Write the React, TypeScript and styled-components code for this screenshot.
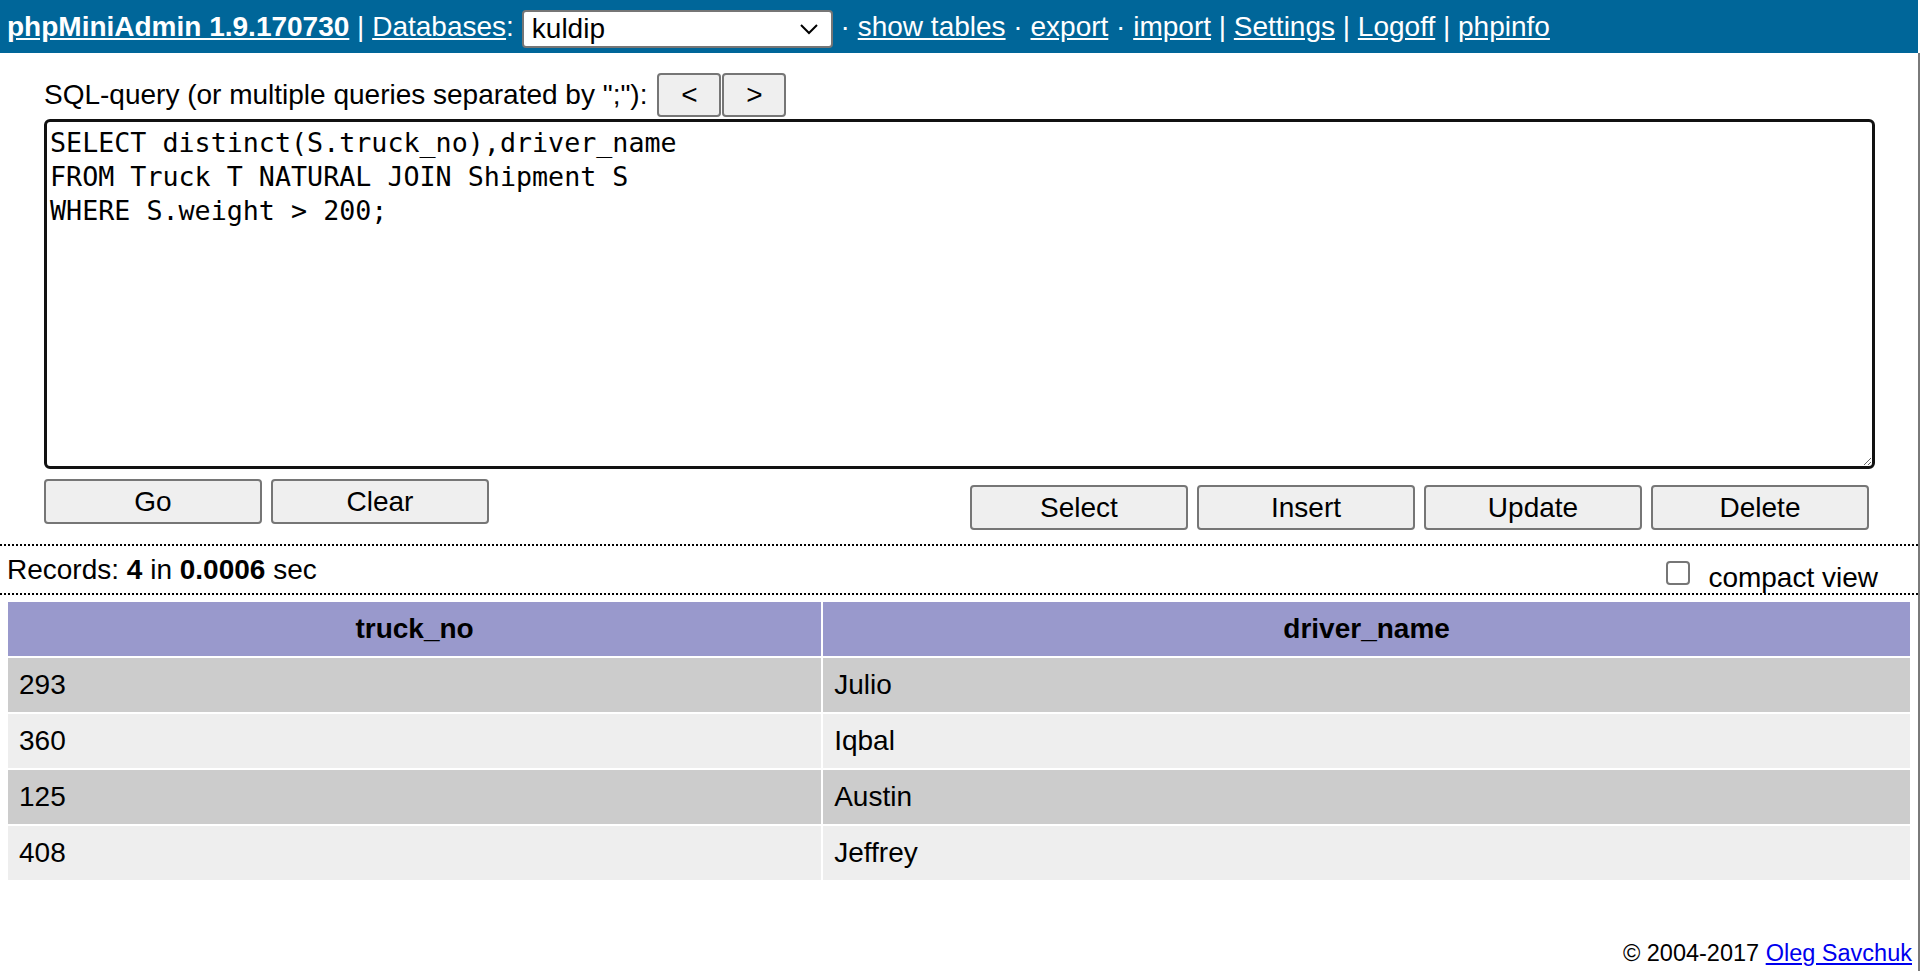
import * as React from "react";
import styled, { createGlobalStyle } from "styled-components";

const PALETTE = {
  HEADER_BG: "#006699",
  BTN_BG: "#efefef",
  BTN_BORDER: "#767676",
  TH_BG: "#9999cc",
  ROW_ODD: "#cccccc",
  ROW_EVEN: "#eeeeee",
  LINK: "#0000ee",
};

const rows = [
  { truck: "293", driver: "Julio" },
  { truck: "360", driver: "Iqbal" },
  { truck: "125", driver: "Austin" },
  { truck: "408", driver: "Jeffrey" },
];

const SQL = `SELECT distinct(S.truck_no),driver_name
FROM Truck T NATURAL JOIN Shipment S
WHERE S.weight > 200;`;

const App = () => {
  return (
    <Shell>
      <GlobalStyle />
      <Column>
        <Header>
          <Title href="#">phpMiniAdmin 1.9.170730</Title> |{" "}
          <NavLink href="#">Databases</NavLink>:
          <DbSelect>
            <span>kuldip</span>
            <svg width="20" height="12" viewBox="0 0 20 12">
              <polyline points="2,2 10,10 18,2" fill="none" stroke="#000" strokeWidth="2" />
            </svg>
          </DbSelect>{" "}
          · <NavLink href="#">show tables</NavLink> · <NavLink href="#">export</NavLink> ·{" "}
          <NavLink href="#">import</NavLink> | <NavLink href="#">Settings</NavLink> |{" "}
          <NavLink href="#">Logoff</NavLink> | <NavLink href="#">phpinfo</NavLink>
        </Header>

        <Form>
          <LabelRow>
            <span>SQL-query (or multiple queries separated by ";"):</span>
            <HistoryButtons>
              <NavButton>&lt;</NavButton>
              <NavButton>&gt;</NavButton>
            </HistoryButtons>
          </LabelRow>
          <QueryBox defaultValue={SQL} spellCheck={false} />
          <ButtonRow>
            <ButtonGroup>
              <Button>Go</Button>
              <Button>Clear</Button>
            </ButtonGroup>
            <ButtonGroup $offset>
              <Button>Select</Button>
              <Button>Insert</Button>
              <Button>Update</Button>
              <Button>Delete</Button>
            </ButtonGroup>
          </ButtonRow>
        </Form>

        <RecordsBar>
          <RecordsText>
            Records: <b>4</b> in <b>0.0006</b> sec
          </RecordsText>
          <CompactLabel>
            <Check type="checkbox" />
            <span>compact view</span>
          </CompactLabel>
        </RecordsBar>

        <ResultTable>
          <thead>
            <tr>
              <Th style={{ width: "42.8%" }}>truck_no</Th>
              <Th>driver_name</Th>
            </tr>
          </thead>
          <tbody>
            {rows.map((r, indx) => (
              <tr key={indx}>
                <Td $odd={indx % 2 === 0}>{r.truck}</Td>
                <Td $odd={indx % 2 === 0}>{r.driver}</Td>
              </tr>
            ))}
          </tbody>
        </ResultTable>

        <Footer>
          © 2004-2017 <FooterLink href="#">Oleg Savchuk</FooterLink>
        </Footer>
      </Column>
      <Edge />
    </Shell>
  );
};

export default App;

const GlobalStyle = createGlobalStyle`
  html, body {
    margin: 0;
    padding: 0;
    background: #fff;
  }
  body {
    font-family: "Liberation Sans", Arial, sans-serif;
    font-size: 28px;
    color: #000;
  }
`;

const Shell = styled.div`
  display: flex;
  min-height: 100vh;
`;

const Column = styled.div`
  width: 1918px;
`;

const Edge = styled.div`
  width: 2px;
  margin-top: 53px;
  background: #7a7a7a;
`;

const Header = styled.div`
  height: 53px;
  line-height: 53px;
  padding-left: 7px;
  background: ${PALETTE.HEADER_BG};
  color: #fff;
  white-space: nowrap;
`;

const Title = styled.a`
  color: #fff;
  font-weight: bold;
  text-decoration: underline;
`;

const NavLink = styled.a`
  color: #fff;
  text-decoration: underline;
`;

const DbSelect = styled.span`
  display: inline-flex;
  align-items: center;
  justify-content: space-between;
  box-sizing: border-box;
  width: 311px;
  height: 38px;
  margin-left: 8px;
  padding: 0 12px 0 8px;
  vertical-align: middle;
  line-height: 34px;
  background: #fff;
  color: #000;
  border: 2px solid ${PALETTE.BTN_BORDER};
  border-radius: 4px;
`;

const Form = styled.div`
  padding-left: 44px;
`;

const LabelRow = styled.div`
  display: flex;
  align-items: center;
  margin-top: 20px;
  gap: 10px;
`;

const HistoryButtons = styled.div`
  display: flex;
  gap: 1px;
`;

const Button = styled.button`
  box-sizing: border-box;
  width: 218px;
  height: 45px;
  padding: 0;
  font-family: inherit;
  font-size: 28px;
  color: #000;
  background: ${PALETTE.BTN_BG};
  border: 2px solid ${PALETTE.BTN_BORDER};
  border-radius: 4px;
`;

const NavButton = styled(Button)`
  width: 64px;
  height: 44px;
`;

const QueryBox = styled.textarea`
  display: block;
  box-sizing: border-box;
  width: 1831px;
  height: 350px;
  margin: 2px 0 0;
  padding: 4px 3px;
  border: 3px solid #111;
  border-radius: 6px;
  outline: none;
  resize: both;
  font-family: "DejaVu Sans Mono", "Liberation Mono", monospace;
  font-size: 26.7px;
  line-height: 34px;
  color: #000;
`;

const ButtonRow = styled.div`
  display: flex;
  justify-content: space-between;
  align-items: flex-start;
  width: 1825px;
  height: 51px;
  margin-top: 10px;
`;

const ButtonGroup = styled.div<{ $offset?: boolean }>`
  display: flex;
  gap: 9px;
  margin-top: ${(p) => (p.$offset ? "6px" : "0")};
`;

const RecordsBar = styled.div`
  display: flex;
  justify-content: space-between;
  align-items: flex-start;
  height: 47px;
  margin-top: 14px;
  padding: 0 40px 0 7px;
  border-top: 2px dotted #000;
  border-bottom: 2px dotted #000;
`;

const RecordsText = styled.div`
  line-height: 47px;
`;

const CompactLabel = styled.label`
  display: flex;
  align-items: flex-start;
  span {
    margin-top: 16px;
    line-height: 32px;
  }
`;

const Check = styled.input`
  appearance: none;
  box-sizing: border-box;
  width: 24px;
  height: 24px;
  margin: 15px 18px 0 0;
  background: #fff;
  border: 2px solid ${PALETTE.BTN_BORDER};
  border-radius: 4px;
`;

const ResultTable = styled.table`
  width: calc(100% - 12px);
  margin: 5px 6px 0;
  border-spacing: 2px;
`;

const Th = styled.th`
  padding: 11px;
  line-height: 32px;
  font-weight: bold;
  text-align: center;
  background: ${PALETTE.TH_BG};
`;

const Td = styled.td<{ $odd: boolean }>`
  padding: 11px;
  line-height: 32px;
  background: ${(p) => (p.$odd ? PALETTE.ROW_ODD : PALETTE.ROW_EVEN)};
`;

const Footer = styled.div`
  margin-top: 55px;
  padding-right: 6px;
  text-align: right;
  font-size: 23.5px;
  line-height: 32px;
`;

const FooterLink = styled.a`
  color: ${PALETTE.LINK};
  text-decoration: underline;
`;
